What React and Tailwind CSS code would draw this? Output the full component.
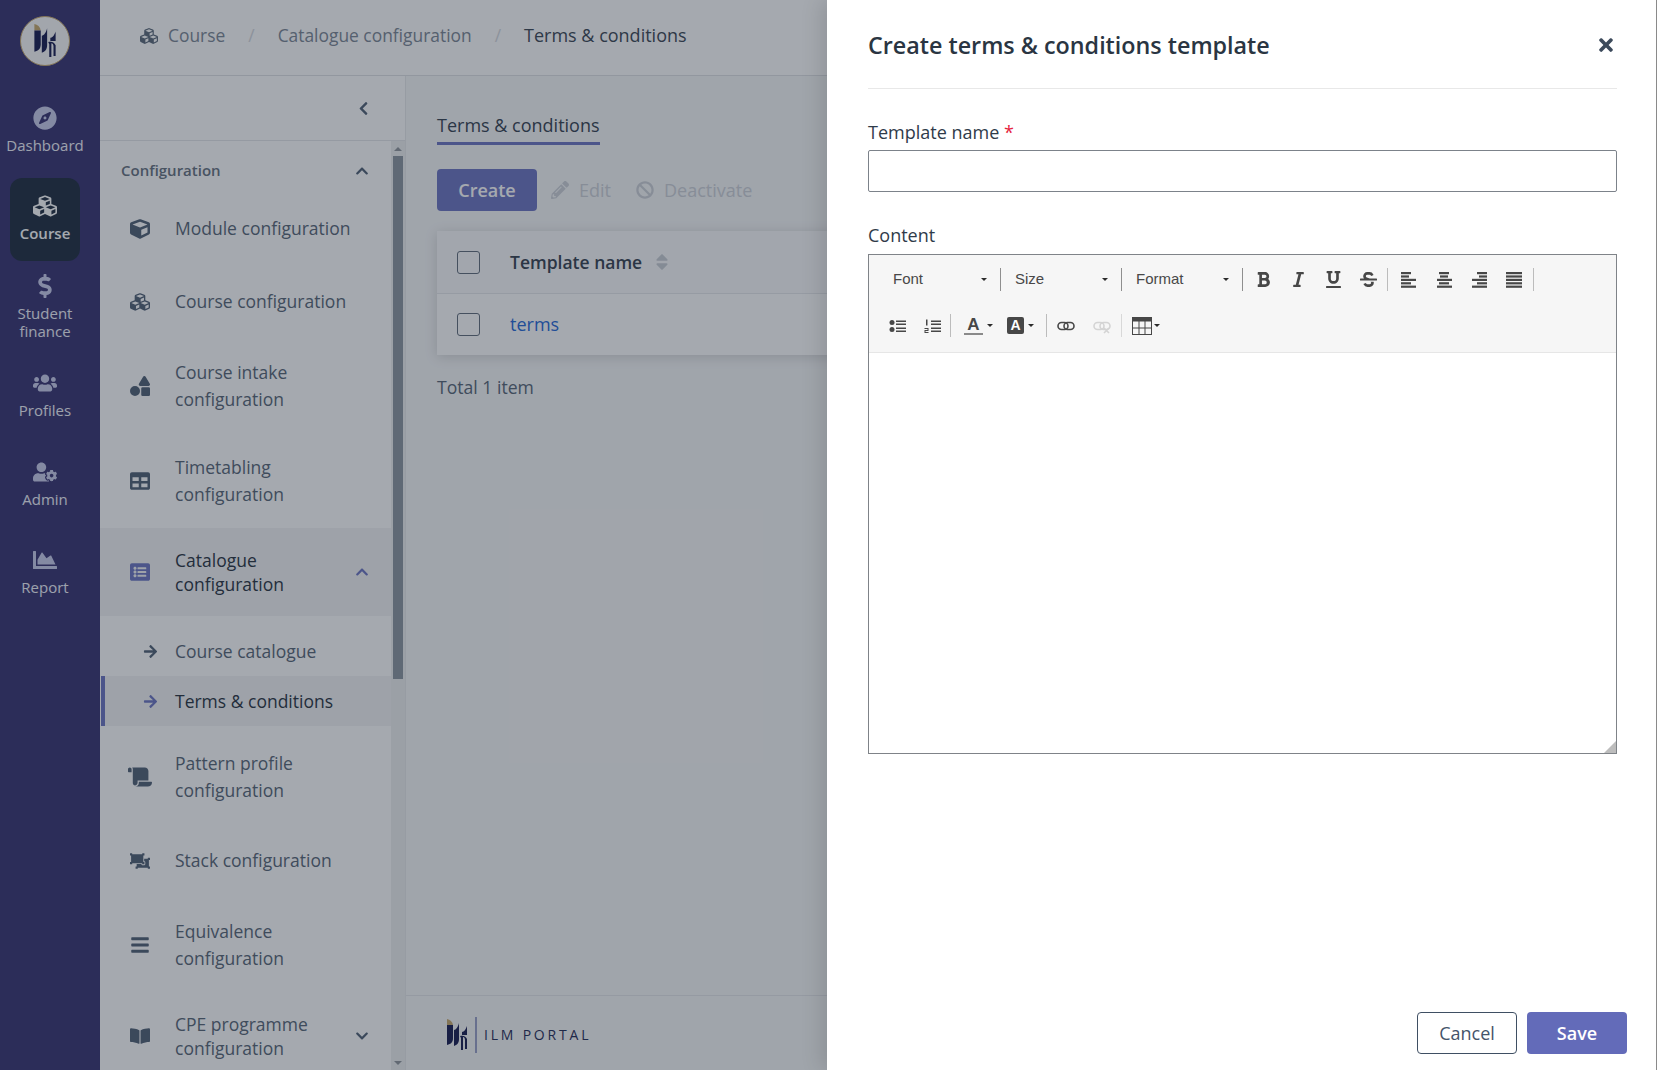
import React from 'react';
import {
  FaArrowRight, FaBan, FaBars, FaBold, FaBookOpen, FaChartArea, FaChevronDown, FaChevronLeft, FaChevronUp,
  FaCompass, FaCube, FaCubes, FaDollarSign, FaItalic, FaListAlt, FaObjectUngroup, FaPencilAlt, FaScroll,
  FaShapes, FaSort, FaStrikethrough, FaTable, FaTimes, FaUnderline, FaUserCog, FaUsers,
} from 'react-icons/fa';

function LogoMark({ className }) {
  return (
    <svg viewBox="0 0 20 32" className={className}>
      <path d="M0 0c3 .5 5.5 2.500 6 6H0z" fill="#c7a86b" />
      <path d="M0 6h6v13c0 4-2 6-6 7z" fill="#15194f" />
      <path d="M12 4v16c0 4-2 6-5 7V11c2 0 4-3 5-7z" fill="#15194f" />
      <path d="M20 7v9h-5v-3c2 0 4-3 5-6z" fill="#15194f" />
      <path d="M13 17c4-1 6 1 7 3v10h-2V21c0-2-1-3-2-3v13h-2V19z" fill="#15194f" />
    </svg>
  );
}

function Lines({ rows }) {
  return (
    <svg viewBox="0 0 16 16" className="w-4 h-4" fill="#474747">
      {rows.map(([x, w], i) => <rect key={i} x={x} y={i * 3.400} width={w} height="2.200" />)}
    </svg>
  );
}

function BulletIcon() {
  return (
    <svg viewBox="0 0 17 16" className="w-[17px] h-4" fill="#474747">
      <circle cx="3" cy="4.500" r="2.500" />
      <circle cx="3" cy="11.500" r="2.500" />
      <rect x="7" y="2.500" width="10" height="1.500" />
      <rect x="7" y="5.500" width="10" height="1.500" />
      <rect x="7" y="9.500" width="10" height="1.500" />
      <rect x="7" y="12.500" width="10" height="1.500" />
    </svg>
  );
}

function NumberIcon() {
  return (
    <svg viewBox="0 0 17 16" className="w-[17px] h-4" fill="#474747">
      <rect x="2" y="1.500" width="1.500" height="6" />
      <path d="M.5 10h4v3h-3v1h3v1h-4v-3h3v-1h-3z" />
      <rect x="7" y="2.500" width="10" height="1.500" />
      <rect x="7" y="5.500" width="10" height="1.500" />
      <rect x="7" y="9.500" width="10" height="1.500" />
      <rect x="7" y="12.500" width="10" height="1.500" />
    </svg>
  );
}

function LinkIcon({ muted }) {
  return (
    <svg viewBox="0 0 18 16" className="w-[18px] h-4" fill="none" stroke={muted ? '#d4d4d4' : '#474747'} strokeWidth="1.600">
      <rect x="1" y="4.500" width="10" height="7" rx="3.500" />
      <rect x="7" y="4.500" width="10" height="7" rx="3.500" />
      {muted && <path d="M11 10l5 5M16 10l-5 5" />}
    </svg>
  );
}

function TableIcon() {
  return (
    <svg viewBox="0 0 20 18" className="w-5 h-[18px]" fill="none" stroke="#474747">
      <rect x=".5" y=".5" width="19" height="17" />
      <rect x="0" y="0" width="20" height="4" fill="#474747" />
      <path d="M7 4v14M13 4v14M0 11h20" />
    </svg>
  );
}

const Caret = ({ className = '' }) => (
  <span className={`w-0 h-0 border-x-[3px] border-x-transparent border-t-[3px] border-t-[#2b2b2b] ${className}`} />
);

const Sep = ({ h = 'h-[23px]', color = 'bg-[#bcbcbc]' }) => <span className={`w-px shrink-0 ${h} ${color}`} />;

function Combo({ label, width, pad }) {
  return (
    <>
      <div className={`${width} ${pad} shrink-0 pr-[13px] flex items-center justify-between`}>
        <span className="text-[15px] text-[#484848] font-['Liberation_Sans',sans-serif]">{label}</span>
        <Caret />
      </div>
      <Sep color="bg-[#8f8f8f]" />
    </>
  );
}

const ToolBtn = ({ children }) => (
  <span className="w-[35px] shrink-0 flex items-center justify-center text-[#474747]">{children}</span>
);

const railItems = [
  { icon: FaCompass, label: ['Dashboard'] },
  { icon: FaCubes, label: ['Course'], active: true },
  { icon: FaDollarSign, label: ['Student', 'finance'] },
  { icon: FaUsers, label: ['Profiles'] },
  { icon: FaUserCog, label: ['Admin'] },
  { icon: FaChartArea, label: ['Report'] },
];

function RailItem({ item }) {
  const Icon = item.icon;
  return (
    <div className={`w-[70px] h-[83px] pb-[2px] rounded-xl flex flex-col items-center justify-center ${item.active ? 'bg-[#1d2a3f] text-white' : 'text-[#f1f2fb]'}`}>
      <Icon className={`text-[24px] h-6 ${item.active ? 'text-white' : 'text-[#c9cbec]'}`} />
      <div className={`mt-[6px] text-[15px] leading-[18px] text-center whitespace-nowrap ${item.active ? 'font-semibold' : ''}`}>
        {item.label.map(l => <div key={l}>{l}</div>)}
      </div>
    </div>
  );
}

function MenuRow({ icon: Icon, lines, chevron, h = 'h-[95px]', active, iconClass = 'text-[20px]' }) {
  return (
    <div className={`${h} pl-[30px] pr-[22px] flex items-center shrink-0 ${active ? 'bg-[#f3f4f5] text-[#27313f]' : 'text-[#566475]'}`}>
      <span className={`w-[45px] shrink-0 ${active ? 'text-[#6c74c2]' : 'text-[#4f5f74]'}`}>
        <Icon className={iconClass} />
      </span>
      <div className={`text-[17.5px] flex-1 ${chevron ? 'leading-[24px]' : 'leading-[27px]'} ${active ? 'font-medium' : ''}`}>
        {lines.map(l => <div key={l} className="whitespace-nowrap">{l}</div>)}
      </div>
      {chevron === 'up' && <FaChevronUp className={`text-[14px] ${active ? 'text-[#6c74c2]' : 'text-[#4f5f74]'}`} />}
      {chevron === 'down' && <FaChevronDown className="text-[14px] text-[#4f5f74]" />}
    </div>
  );
}

function Sidebar() {
  return (
    <aside className="w-[306px] shrink-0 border-r border-[#e8e9ec] flex flex-col bg-white">
      <div className="h-[65px] shrink-0 border-b border-[#e4e6ea] flex items-center justify-end pr-[34px] text-[#4f5f74]">
        <FaChevronLeft className="text-[15px]" />
      </div>
      <div className="flex-1 flex min-h-0 overflow-hidden">
        <div className="w-[291px] shrink-0 flex flex-col">
          <div className="h-[51px] shrink-0 pl-[21px] pr-[22px] pt-[8px] flex items-center justify-between text-[#65707e]">
            <span className="text-[15px] font-semibold">Configuration</span>
            <FaChevronUp className="text-[14px] text-[#4f5f74]" />
          </div>
          <MenuRow icon={FaCube} lines={['Module configuration']} h="h-[73px]" />
          <MenuRow icon={FaCubes} lines={['Course configuration']} h="h-[73px]" />
          <MenuRow icon={FaShapes} lines={['Course intake', 'configuration']} />
          <MenuRow icon={FaTable} lines={['Timetabling', 'configuration']} />
          <MenuRow icon={FaListAlt} lines={['Catalogue', 'configuration']} h="h-[88px]" chevron="up" active />
          <div className="pt-[10px] pb-[3px] shrink-0">
            <div className="h-[50px] pl-[34px] flex items-center text-[17.5px] text-[#566475]">
              <FaArrowRight className="text-[15px] text-[#4f5f74] w-[33px] mr-[8px]" />
              <span>Course catalogue</span>
            </div>
            <div className="h-[50px] pl-[34px] flex items-center text-[17.5px] font-medium text-[#27313f] bg-[#f3f4f5] border-l-4 border-[#6c74c2] ml-px">
              <FaArrowRight className="text-[15px] text-[#6c74c2] w-[33px] -ml-[5px] mr-[8px]" />
              <span>Terms &amp; conditions</span>
            </div>
          </div>
          <MenuRow icon={FaScroll} lines={['Pattern profile', 'configuration']} iconClass="text-[24px] -ml-[2px]" />
          <MenuRow icon={FaObjectUngroup} lines={['Stack configuration']} h="h-[73px]" />
          <MenuRow icon={FaBars} lines={['Equivalence', 'configuration']} />
          <MenuRow icon={FaBookOpen} lines={['CPE programme', 'configuration']} h="h-[88px]" chevron="down" />
        </div>
        <div className="w-[14px] shrink-0 bg-[#eef0f1] flex flex-col items-center">
          <span className="h-[15px] flex items-center"><span className="w-0 h-0 border-x-[4px] border-x-transparent border-b-[4px] border-b-[#8f959c]" /></span>
          <div className="w-[10px] h-[523px] bg-[#8b959f]" />
          <div className="flex-1" />
          <span className="h-[15px] flex items-center"><span className="w-0 h-0 border-x-[4px] border-x-transparent border-t-[4px] border-t-[#8f959c]" /></span>
        </div>
      </div>
    </aside>
  );
}

function Content() {
  return (
    <main className="flex-1 min-w-0 flex flex-col bg-[#f7f8f9] text-[18px]">
      <div className="flex-1 pl-[31px] pt-[36px]">
        <div className="w-[163px] border-b-[3px] border-[#6c74c2] pb-[3px] leading-[27px] text-[#34404f] font-medium whitespace-nowrap">Terms &amp; conditions</div>
        <div className="mt-[24px] flex items-center">
          <button className="w-[100px] h-[42px] rounded bg-[#6c74c2] text-white font-semibold">Create</button>
          <span className="ml-[14px] flex items-center text-[#cdd1d8]"><FaPencilAlt className="text-[18px]" /><span className="ml-[10px]">Edit</span></span>
          <span className="ml-[25px] flex items-center text-[#cdd1d8]"><FaBan className="text-[18px]" /><span className="ml-[10px]">Deactivate</span></span>
        </div>
        <div className="mt-[20px] bg-white shadow-[0_2px_12px_rgba(0,0,0,0.15)]">
          <div className="h-[63px] border-b border-[#e6e8eb] flex items-center bg-[#fbfbfc]">
            <span className="ml-[20px] w-[23px] h-[23px] rounded-[3px] border border-[#5f6b7a] bg-transparent" />
            <span className="ml-[30px] text-[17.5px] font-semibold text-[#34404f]">Template name</span>
            <FaSort className="ml-[10px] text-[#c9cdd4] text-[20px]" />
          </div>
          <div className="h-[61px] flex items-center">
            <span className="ml-[20px] w-[23px] h-[23px] rounded-[3px] border border-[#5f6b7a]" />
            <span className="ml-[30px] text-[#2468d8] font-medium">terms</span>
          </div>
        </div>
        <div className="mt-[19px] leading-[27px] text-[17.6px] text-[#566475]">Total 1 item</div>
      </div>
      <div className="h-[75px] shrink-0 border-t border-[#e4e6ea] flex items-center pl-[41px] pt-[3px]">
        <LogoMark className="w-5 h-8" />
        <span className="ml-2 w-[2px] h-9 bg-[#9aa0c8]" />
        <span className="ml-[7px] text-[14px] tracking-[0.2em] text-[#1f2a55]">ILM PORTAL</span>
      </div>
    </main>
  );
}

function Drawer() {
  return (
    <div className="absolute top-0 right-0 bottom-0 w-[830px] bg-white border-r border-[#8a8a8a] shadow-[-6px_0_20px_rgba(0,0,0,0.12)] pl-[41px] pr-[39px] flex flex-col text-[#2f3b4a]">
      <div className="h-[89px] shrink-0 border-b border-[#e8e8e8] flex items-center justify-between pt-[2px]">
        <h2 className="text-[23.3px] font-semibold text-[#2a3542]">Create terms &amp; conditions template</h2>
        <FaTimes className="text-[#3c4a5b] text-[20px] mr-[1px]" />
      </div>
      <label className="mt-[30px] text-[18px] leading-[27px]">Template name <span className="text-[#e5233d]">*</span></label>
      <input className="mt-[4px] h-[42px] border border-[#7c828a] rounded-[2px] shrink-0" />
      <label className="mt-[30px] text-[18px] leading-[27px]">Content</label>
      <div className="mt-[5px] h-[500px] shrink-0 border border-[#7f8388] flex flex-col relative">
        <div className="h-[98px] shrink-0 bg-[#f6f6f6] border-b border-[#e6e6e6] flex flex-col">
          <div className="mt-[13px] h-[23px] flex items-center">
            <Combo label="Font" width="w-[131px]" pad="pl-[24px]" />
            <Combo label="Size" width="w-[120px]" pad="pl-[14px]" />
            <Combo label="Format" width="w-[120px]" pad="pl-[14px]" />
            <span className="w-[3px]" />
            <ToolBtn><FaBold className="text-[17px]" /></ToolBtn>
            <ToolBtn><FaItalic className="text-[17px]" /></ToolBtn>
            <ToolBtn><FaUnderline className="text-[17px]" /></ToolBtn>
            <ToolBtn><FaStrikethrough className="text-[17px]" /></ToolBtn>
            <span className="w-px" />
            <Sep />
            <span className="w-[3px]" />
            <ToolBtn><Lines rows={[[0, 10], [0, 8], [0, 15], [0, 10], [0, 15]]} /></ToolBtn>
            <ToolBtn><Lines rows={[[3, 10], [4, 8], [1, 15], [3, 10], [1, 15]]} /></ToolBtn>
            <ToolBtn><Lines rows={[[6, 10], [8, 8], [1, 15], [6, 10], [1, 15]]} /></ToolBtn>
            <ToolBtn><Lines rows={[[0, 16], [0, 16], [0, 16], [0, 16], [0, 16]]} /></ToolBtn>
            <span className="w-[2px]" />
            <Sep />
          </div>
          <div className="mt-[23px] h-[23px] flex items-center pl-[11px]">
            <ToolBtn><BulletIcon /></ToolBtn>
            <ToolBtn><NumberIcon /></ToolBtn>
            <Sep />
            <span className="w-[13px]" />
            <span className="w-[36px] flex items-center gap-[4px] shrink-0">
              <span className="flex flex-col items-center text-[#474747] font-bold text-[17px] leading-[15px] font-['Liberation_Sans',sans-serif]">A<span className="w-[19px] h-[2px] bg-[#8a8a8a] mt-px" /></span>
              <Caret />
            </span>
            <span className="w-[7px]" />
            <span className="w-[30px] flex items-center gap-[4px] shrink-0">
              <span className="w-[17px] h-[17px] rounded-[2px] bg-[#474747] text-white font-bold text-[14px] leading-[17px] text-center font-['Liberation_Sans',sans-serif]">A</span>
              <Caret />
            </span>
            <span className="w-[9px]" />
            <Sep />
            <span className="w-px" />
            <ToolBtn><LinkIcon /></ToolBtn>
            <span className="w-px" />
            <ToolBtn><LinkIcon muted /></ToolBtn>
            <span className="w-[2px]" />
            <Sep color="bg-[#d8d8d8]" />
            <span className="w-[10px]" />
            <span className="flex items-center gap-[2px]"><TableIcon /><Caret /></span>
          </div>
        </div>
        <div className="flex-1 bg-white" />
        <span className="absolute right-0 bottom-0 w-3 h-3 bg-[#bdbdbd] [clip-path:polygon(100%_0,100%_100%,0_100%)]" />
      </div>
      <div className="flex-1" />
      <div className="mb-[16px] flex justify-end gap-[10px] -mr-[10px] text-[18px]">
        <button className="w-[100px] h-[42px] rounded border border-[#3f4f63] text-[#45546a]">Cancel</button>
        <button className="w-[100px] h-[42px] rounded bg-[#636bb9] text-white font-semibold">Save</button>
      </div>
    </div>
  );
}

export default function App() {
  return (
    <div className="relative w-[1657px] h-[1070px] overflow-hidden flex font-['Open_Sans',sans-serif] bg-white">
      <nav className="w-[100px] shrink-0 pr-[10px] bg-[#363171] flex flex-col items-center">
        <div className="h-[89px] shrink-0 flex items-start pt-[16px]">
          <div className="w-[50px] h-[50px] rounded-full bg-[#fbfbfb] border border-[#c7a86b] flex items-center justify-center">
            <LogoMark className="w-[22px] h-[34px]" />
          </div>
        </div>
        <div className="flex flex-col gap-[5.6px]">
          {railItems.map(item => <RailItem key={item.label[0]} item={item} />)}
        </div>
      </nav>
      <div className="flex-1 min-w-0 flex flex-col">
        <header className="h-[76px] shrink-0 border-b border-[#dfe1e5] pl-[40px] pb-[4px] flex items-center text-[17.4px] bg-white">
          <FaCubes className="text-[#5a6879] text-[18px]" />
          <span className="ml-[10px] text-[#7b8694]">Course</span>
          <span className="mx-[23px] text-[#d6d9de]">/</span>
          <span className="text-[#7b8694]">Catalogue configuration</span>
          <span className="mx-[23px] text-[#d6d9de]">/</span>
          <span className="text-[#3a4552] font-medium text-[18px]">Terms &amp; conditions</span>
        </header>
        <div className="flex-1 flex min-h-0">
          <Sidebar />
          <Content />
        </div>
      </div>
      <div className="absolute inset-0 bg-[#1f2937]/40" />
      <Drawer />
    </div>
  );
}
